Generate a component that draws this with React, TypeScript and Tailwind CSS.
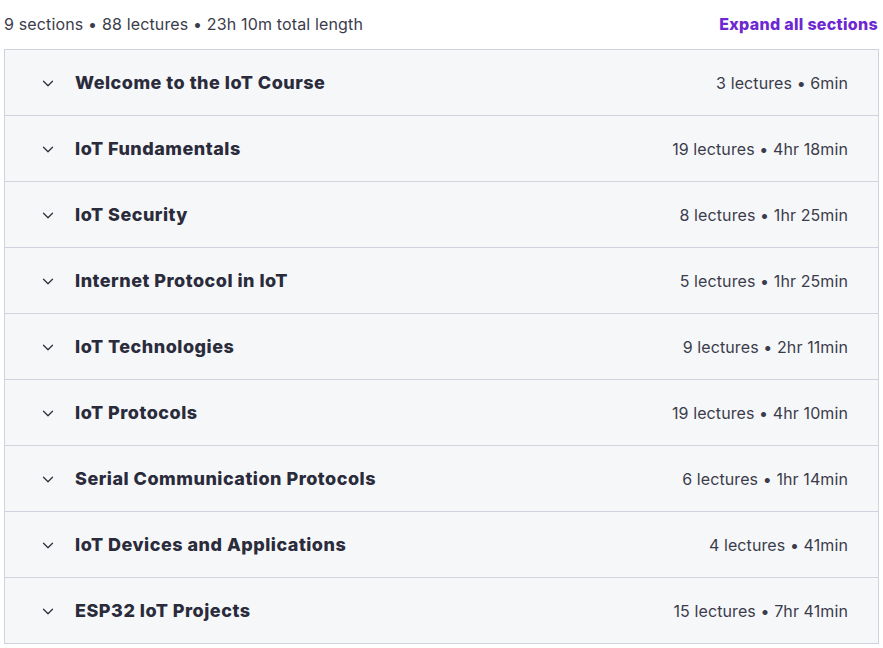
import React from "react";

const sections: [string, string][] = [
  ["Welcome to the IoT Course", "3 lectures • 6min"],
  ["IoT Fundamentals", "19 lectures • 4hr 18min"],
  ["IoT Security", "8 lectures • 1hr 25min"],
  ["Internet Protocol in IoT", "5 lectures • 1hr 25min"],
  ["IoT Technologies", "9 lectures • 2hr 11min"],
  ["IoT Protocols", "19 lectures • 4hr 10min"],
  ["Serial Communication Protocols", "6 lectures • 1hr 14min"],
  ["IoT Devices and Applications", "4 lectures • 41min"],
  ["ESP32 IoT Projects", "15 lectures • 7hr 41min"],
];

function Chevron() {
  return (
    <svg width="12" height="12" viewBox="0 0 12 12" fill="none" className="shrink-0">
      <path d="M1.5 4.2l4.5 4.5 4.5-4.5" stroke="#303141" strokeWidth="1.3" strokeLinecap="round" strokeLinejoin="round" />
    </svg>
  );
}

export default function App() {
  return (
    <div className="w-[883px] h-[648px] bg-white text-[#2a2b3b] font-['Inter',sans-serif]">
      <div className="flex items-center justify-between pl-[4px] pr-[5px] h-[49px] pb-[2px]">
        <span className="text-[16px] tracking-[0.15px] text-[#3b3c4b]">9 sections • 88 lectures • 23h 10m total length</span>
        <span className="text-[16px] font-extrabold tracking-[0.3px] text-[#6d28d2]">Expand all sections</span>
      </div>
      <div className="ml-[4px] w-[875px] border border-[#d1d2e0] bg-[#f6f7f9]">
        {sections.map(([title, meta], i) => (
          <div
            key={i}
            className={`flex items-center pl-[37px] pr-[30px] ${i < sections.length - 1 ? "h-[66px] border-b border-[#d1d2e0]" : "h-[65px]"}`}
          >
            <Chevron />
            <span className="ml-[21px] text-[18px] font-extrabold tracking-[0.5px]">{title}</span>
            <span className="ml-auto text-[16px] tracking-[0.1px] text-[#3b3c4b]">{meta}</span>
          </div>
        ))}
      </div>
    </div>
  );
}
